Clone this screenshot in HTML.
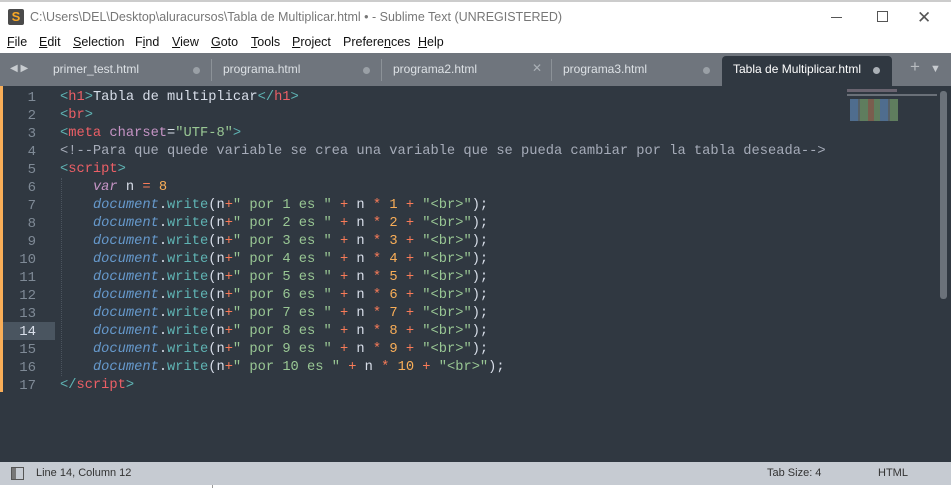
<!DOCTYPE html>
<html><head><meta charset="utf-8"><style>
*{margin:0;padding:0;box-sizing:border-box}
body{width:951px;height:488px;overflow:hidden;background:#fff;font-family:"Liberation Sans",sans-serif;position:relative}
.abs{position:absolute}
#title{top:0;left:0;width:951px;height:32px;background:#fff;border-top:2px solid #ccc}
#title .t{left:30px;top:8px;font-size:12.5px;color:#777}
#menu{top:32px;left:0;width:951px;height:21px;font-size:12.5px;color:#111}
#menu span{position:absolute;top:3px}
#tabs{top:53px;left:0;width:951px;height:33px;background:#6f757d}
.tab{position:absolute;top:9px;font-size:12px;color:#dde1e5}
.dot{position:absolute;top:14px;width:7px;height:7px;border-radius:50%;background:#9aa0a6}
.sep{position:absolute;top:6px;width:1px;height:22px;background:#8c9298}
#ed{top:86px;left:0;width:951px;height:376px;background:#303841}
#code{left:60px;top:3px;font-family:"Liberation Mono",monospace;font-size:13.73px;line-height:18px;color:#d8dee9;white-space:pre}
#gut{left:0;top:3px;width:36px;font-family:"Liberation Mono",monospace;font-size:14px;line-height:18px;color:#7f8a96;text-align:right;white-space:pre}
.tg{color:#ec5f66}.br{color:#5fb4b4}.s{color:#99c794}.a{color:#c594c5}.c{color:#a6acb9}.n{color:#f9ae58}.o{color:#f97b58}.k{color:#c594c5;font-style:italic}.d{color:#6699cc;font-style:italic}.f{color:#5fb4b4}
#status{top:462px;left:0;width:951px;height:23px;background:#c6cbd2;font-size:11px;color:#333}
</style></head><body>
<div id="title" class="abs">
 <div class="abs" style="left:8px;top:7px;width:16px;height:16px;background:#4a4a4a;border-radius:2px"><div style="color:#f9a825;font-weight:bold;font-size:13px;text-align:center;line-height:16px">S</div></div>
 <div class="t abs">C:\Users\DEL\Desktop\aluracursos\Tabla de Multiplicar.html • - Sublime Text (UNREGISTERED)</div>
 <div class="abs" style="left:831px;top:15px;width:11px;height:1px;background:#555"></div>
 <div class="abs" style="left:877px;top:9px;width:11px;height:11px;border:1px solid #555"></div>
 <div class="abs" style="left:917px;top:6px;font-size:17px;color:#555">✕</div>
</div>
<div id="menu" class="abs">
<span style="left:7px"><u>F</u>ile</span><span style="left:39px"><u>E</u>dit</span><span style="left:73px"><u>S</u>election</span><span style="left:135px">F<u>i</u>nd</span><span style="left:172px"><u>V</u>iew</span><span style="left:211px"><u>G</u>oto</span><span style="left:251px"><u>T</u>ools</span><span style="left:292px"><u>P</u>roject</span><span style="left:343px">Prefere<u>n</u>ces</span><span style="left:418px"><u>H</u>elp</span>
</div>
<div id="tabs" class="abs">
 <div class="abs" style="left:10px;top:10px;font-size:10px;color:#c8ccd0">◀ ▶</div>
 <div class="tab" style="left:53px">primer_test.html</div><div class="dot" style="left:193px"></div><div class="sep" style="left:211px"></div>
 <div class="tab" style="left:223px">programa.html</div><div class="dot" style="left:363px"></div><div class="sep" style="left:381px"></div>
 <div class="tab" style="left:393px">programa2.html</div><div class="abs" style="left:532px;top:8px;font-size:12px;color:#aab0b6">✕</div><div class="sep" style="left:551px"></div>
 <div class="tab" style="left:563px">programa3.html</div><div class="dot" style="left:703px"></div>
 <div class="abs" style="left:722px;top:3px;width:170px;height:30px;background:#303841;border-radius:4px 4px 0 0"></div>
 <div class="tab" style="left:733px;color:#fff">Tabla de Multiplicar.html</div><div class="dot" style="left:873px;background:#aab0b6"></div>
 <div class="abs" style="left:910px;top:4px;font-size:17px;color:#b8bcc0">+</div><div class="abs" style="left:930px;top:10px;font-size:11px;color:#c8ccd0">▼</div>
</div>
<div id="ed" class="abs">
 <div class="abs" style="left:0;top:0;width:3px;height:306px;background:#f9ae58"></div>
 <div class="abs" style="left:3px;top:236px;width:52px;height:18px;background:#4a5560"></div>
 <div class="abs" style="left:61px;top:92px;width:1px;height:198px;border-left:1px dotted #4b545e"></div>
 <div id="gut" class="abs">1
2
3
4
5
6
7
8
9
10
11
12
13
<span style="color:#d8dee9">14</span>
15
16
17</div>
<div id="code" class="abs"><span class="br">&lt;</span><span class="tg">h1</span><span class="br">&gt;</span>Tabla de multiplicar<span class="br">&lt;/</span><span class="tg">h1</span><span class="br">&gt;</span>
<span class="br">&lt;</span><span class="tg">br</span><span class="br">&gt;</span>
<span class="br">&lt;</span><span class="tg">meta</span> <span class="a">charset</span>=<span class="s">"UTF-8"</span><span class="br">&gt;</span>
<span class="c">&lt;!--Para que quede variable se crea una variable que se pueda cambiar por la tabla deseada--&gt;</span>
<span class="br">&lt;</span><span class="tg">script</span><span class="br">&gt;</span>
    <span class="k">var</span> n <span class="o">=</span> <span class="n">8</span>
    <span class="d">document</span>.<span class="f">write</span>(n<span class="o">+</span><span class="s">" por 1 es "</span> <span class="o">+</span> n <span class="o">*</span> <span class="n">1</span> <span class="o">+</span> <span class="s">"&lt;br&gt;"</span>);
    <span class="d">document</span>.<span class="f">write</span>(n<span class="o">+</span><span class="s">" por 2 es "</span> <span class="o">+</span> n <span class="o">*</span> <span class="n">2</span> <span class="o">+</span> <span class="s">"&lt;br&gt;"</span>);
    <span class="d">document</span>.<span class="f">write</span>(n<span class="o">+</span><span class="s">" por 3 es "</span> <span class="o">+</span> n <span class="o">*</span> <span class="n">3</span> <span class="o">+</span> <span class="s">"&lt;br&gt;"</span>);
    <span class="d">document</span>.<span class="f">write</span>(n<span class="o">+</span><span class="s">" por 4 es "</span> <span class="o">+</span> n <span class="o">*</span> <span class="n">4</span> <span class="o">+</span> <span class="s">"&lt;br&gt;"</span>);
    <span class="d">document</span>.<span class="f">write</span>(n<span class="o">+</span><span class="s">" por 5 es "</span> <span class="o">+</span> n <span class="o">*</span> <span class="n">5</span> <span class="o">+</span> <span class="s">"&lt;br&gt;"</span>);
    <span class="d">document</span>.<span class="f">write</span>(n<span class="o">+</span><span class="s">" por 6 es "</span> <span class="o">+</span> n <span class="o">*</span> <span class="n">6</span> <span class="o">+</span> <span class="s">"&lt;br&gt;"</span>);
    <span class="d">document</span>.<span class="f">write</span>(n<span class="o">+</span><span class="s">" por 7 es "</span> <span class="o">+</span> n <span class="o">*</span> <span class="n">7</span> <span class="o">+</span> <span class="s">"&lt;br&gt;"</span>);
    <span class="d">document</span>.<span class="f">write</span>(n<span class="o">+</span><span class="s">" por 8 es "</span> <span class="o">+</span> n <span class="o">*</span> <span class="n">8</span> <span class="o">+</span> <span class="s">"&lt;br&gt;"</span>);
    <span class="d">document</span>.<span class="f">write</span>(n<span class="o">+</span><span class="s">" por 9 es "</span> <span class="o">+</span> n <span class="o">*</span> <span class="n">9</span> <span class="o">+</span> <span class="s">"&lt;br&gt;"</span>);
    <span class="d">document</span>.<span class="f">write</span>(n<span class="o">+</span><span class="s">" por 10 es "</span> <span class="o">+</span> n <span class="o">*</span> <span class="n">10</span> <span class="o">+</span> <span class="s">"&lt;br&gt;"</span>);
<span class="br">&lt;/</span><span class="tg">script</span><span class="br">&gt;</span></div>
 <div class="abs" style="left:847px;top:3px;width:50px;height:3px;background:#6a6470"></div>
 <div class="abs" style="left:847px;top:8px;width:90px;height:2px;background:#6a7078"></div>
 <div class="abs" style="left:850px;top:13px;width:48px;height:22px;background:repeating-linear-gradient(90deg,#4f6d8e 0 8px,#556066 8px 10px,#5f7d5e 10px 18px,#7a5d4e 18px 24px,#5f7d5e 24px 30px)"></div>
 <div class="abs" style="left:940px;top:5px;width:7px;height:208px;background:#6b727a;border-radius:3px"></div>
</div>
<div id="status" class="abs">
 <div class="abs" style="left:11px;top:5px;width:13px;height:13px;border:1px solid #555;background:linear-gradient(90deg,#777 0 4px,transparent 4px)"></div>
 <div class="abs" style="left:36px;top:5px">Line 14, Column 12</div>
 <div class="abs" style="left:767px;top:5px">Tab Size: 4</div>
 <div class="abs" style="left:878px;top:5px">HTML</div>
</div>
<div class="abs" style="left:212px;top:485px;width:1px;height:3px;background:#999"></div>
</body></html>
